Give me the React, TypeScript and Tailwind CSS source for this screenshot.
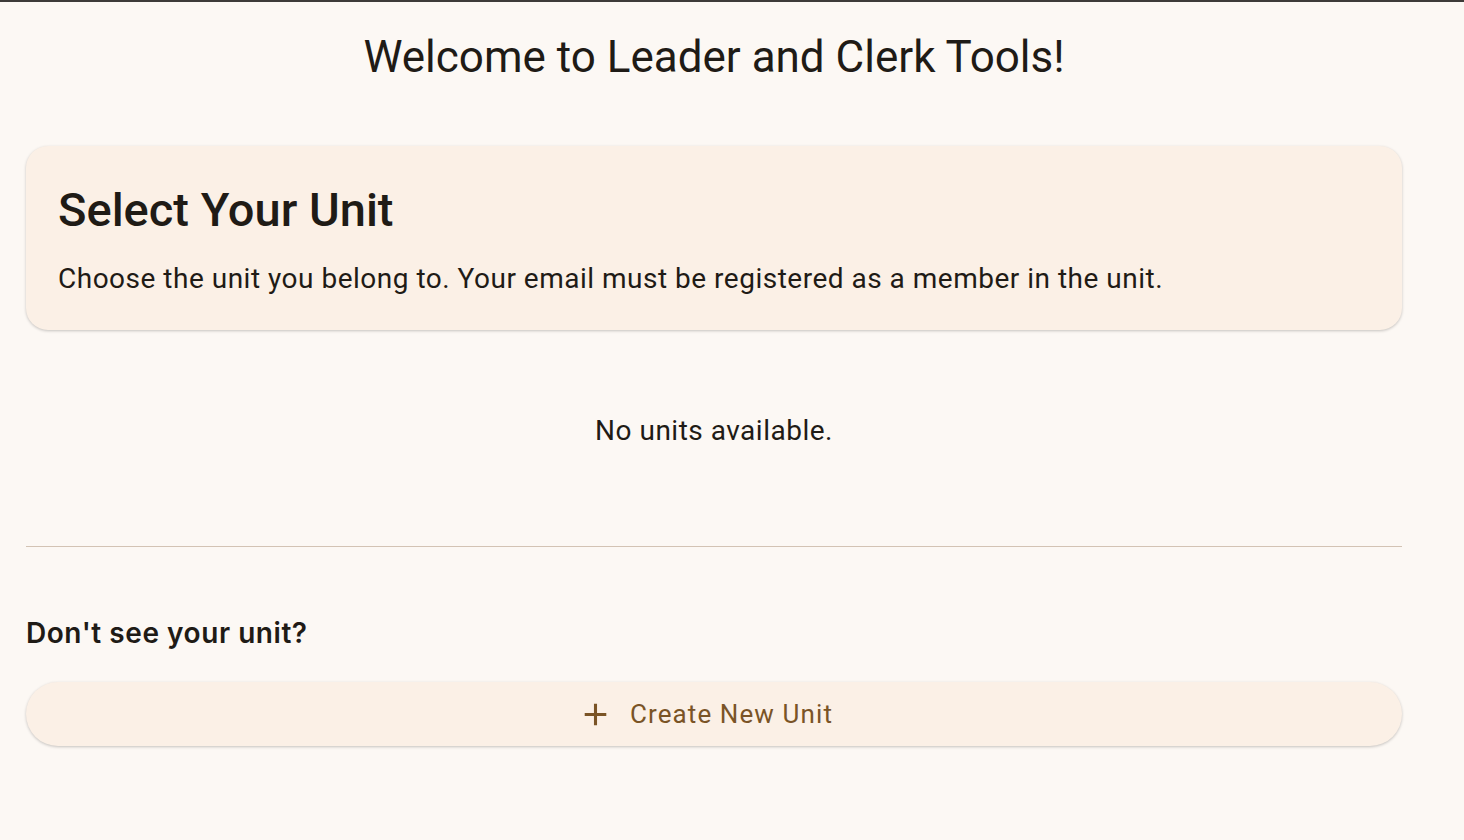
export default function App() {
  return (
    <div className="min-h-screen border-t-2 border-[#3d3b39] bg-[#fcf8f4] font-['Roboto',sans-serif] text-[#1f1b16]">
      <div className="w-[1402px] pl-[26px]">
        {/* Header */}
        <h1 className="mt-[29px] text-center text-[44px] leading-[52px] font-normal">
          Welcome to Leader and Clerk Tools!
        </h1>

        {/* Intro card */}
        <section className="mt-[63px] rounded-[22px] bg-[#fbf0e6] px-8 pt-[36px] pb-[33px] shadow-[0_1px_3px_rgba(0,0,0,0.22)]">
          <h2 className="text-[47px] leading-[56px] font-medium">Select Your Unit</h2>
          <p className="mt-[23px] text-[28px] leading-[36px] tracking-[0.5px]">
            Choose the unit you belong to. Your email must be registered as a member in the unit.
          </p>
        </section>

        <p className="mt-[83px] text-center text-[28px] leading-[36px] tracking-[0.5px]">No units available.</p>

        <hr className="mt-[97px] border-0 border-t border-[#d3c3b4]" />

        <h3 className="mt-[68px] font-['Inter',sans-serif] text-[28px] leading-[36px] font-semibold tracking-[0.55px]">
          Don't see your unit?
        </h3>

        <button className="mt-[31px] flex h-16 w-full items-center justify-center gap-4 rounded-full bg-[#fbf0e6] pr-[18px] text-[26px] tracking-[1.1px] text-[#7a5426] shadow-[0_1px_3px_rgba(0,0,0,0.22)]">
          <svg width="37" height="37" viewBox="0 0 24 24" fill="currentColor">
            <path d="M19 13h-6v6h-2v-6H5v-2h6V5h2v6h6v2z" />
          </svg>
          <span>Create New Unit</span>
        </button>
      </div>
    </div>
  )
}
